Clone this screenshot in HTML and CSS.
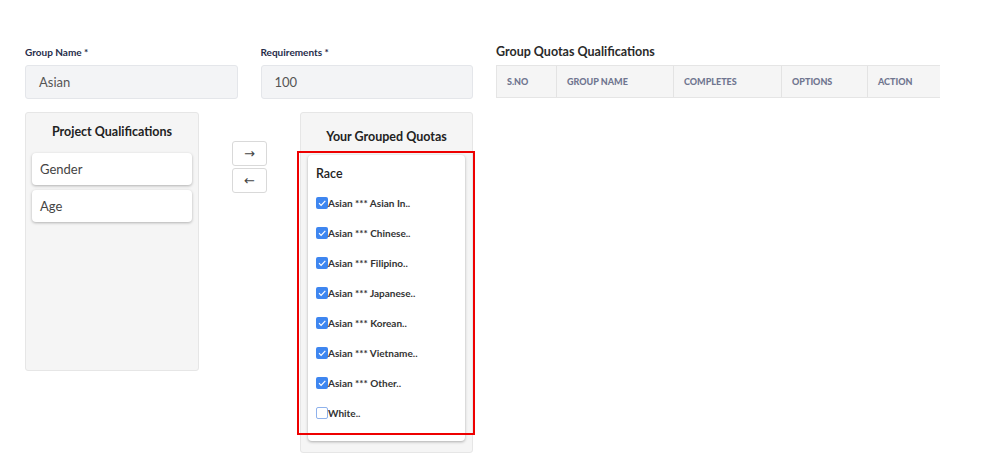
FILE: index.html
```html
<!DOCTYPE html>
<html>
<head>
<meta charset="utf-8">
<link rel="stylesheet" href="styles.css">
</head>
<body>
<div class="page">
  <div class="left">
    <div class="fields">
      <div class="field">
        <label class="label">Group Name *</label>
        <div class="input">Asian</div>
      </div>
      <div class="field">
        <label class="label">Requirements *</label>
        <div class="input">100</div>
      </div>
    </div>
    <div class="panels">
      <div class="panel pq">
        <div class="panel-title">Project Qualifications</div>
        <div class="qcard">Gender</div>
        <div class="qcard">Age</div>
      </div>
      <div class="buttons">
        <button class="arrow">&rarr;</button>
        <button class="arrow">&larr;</button>
      </div>
      <div class="panel gq">
        <div class="panel-title gq-title">Your Grouped Quotas</div>
        <div class="gcard">
          <div class="race">Race</div>
          <div class="row"><span class="cb on"><svg viewBox="0 0 12 12" width="12" height="12"><path d="M3 6.2 L5.1 8.3 L9.3 3.8" fill="none" stroke="#fff" stroke-width="1.2"/></svg></span>Asian *** Asian In..</div>
          <div class="row"><span class="cb on"><svg viewBox="0 0 12 12" width="12" height="12"><path d="M3 6.2 L5.1 8.3 L9.3 3.8" fill="none" stroke="#fff" stroke-width="1.2"/></svg></span>Asian *** Chinese..</div>
          <div class="row"><span class="cb on"><svg viewBox="0 0 12 12" width="12" height="12"><path d="M3 6.2 L5.1 8.3 L9.3 3.8" fill="none" stroke="#fff" stroke-width="1.2"/></svg></span>Asian *** Filipino..</div>
          <div class="row"><span class="cb on"><svg viewBox="0 0 12 12" width="12" height="12"><path d="M3 6.2 L5.1 8.3 L9.3 3.8" fill="none" stroke="#fff" stroke-width="1.2"/></svg></span>Asian *** Japanese..</div>
          <div class="row"><span class="cb on"><svg viewBox="0 0 12 12" width="12" height="12"><path d="M3 6.2 L5.1 8.3 L9.3 3.8" fill="none" stroke="#fff" stroke-width="1.2"/></svg></span>Asian *** Korean..</div>
          <div class="row"><span class="cb on"><svg viewBox="0 0 12 12" width="12" height="12"><path d="M3 6.2 L5.1 8.3 L9.3 3.8" fill="none" stroke="#fff" stroke-width="1.2"/></svg></span>Asian *** Vietname..</div>
          <div class="row"><span class="cb on"><svg viewBox="0 0 12 12" width="12" height="12"><path d="M3 6.2 L5.1 8.3 L9.3 3.8" fill="none" stroke="#fff" stroke-width="1.2"/></svg></span>Asian *** Other..</div>
          <div class="row"><span class="cb"></span>White..</div>
        </div>
        <div class="highlight"></div>
      </div>
    </div>
  </div>
  <div class="right">
    <div class="table-title">Group Quotas Qualifications</div>
    <div class="thead">
      <div class="th c1">S.NO</div>
      <div class="th c2">GROUP NAME</div>
      <div class="th c3">COMPLETES</div>
      <div class="th c4">OPTIONS</div>
      <div class="th c5">ACTION</div>
    </div>
  </div>
</div>
</body>
</html>
```

FILE: styles.css
```css
* { box-sizing: border-box; }
body {
  margin: 0;
  background: #fff;
  font-family: "Lato", "Noto Sans", sans-serif;
  color: #333;
}
.page {
  display: flex;
  gap: 23px;
  padding: 45px 0 0 25px;
}
.left { width: 448px; }
.fields { display: flex; gap: 23px; }
.field { width: 213px; }
.label {
  display: block;
  font-size: 10px;
  font-weight: 700;
  color: #262c4a;
  line-height: 14px;
  margin-bottom: 6px;
}
.input {
  height: 34px;
  background: #f3f4f6;
  border: 1px solid #e4e6ea;
  border-radius: 3px;
  padding: 0 13px;
  display: flex;
  align-items: center;
  font-size: 13px;
  color: #555;
}
.panels {
  display: flex;
  align-items: flex-start;
  margin-top: 13px;
}
.panel {
  background: #f5f5f5;
  border: 1px solid #e6e6e6;
  border-radius: 3px;
  position: relative;
}
.pq {
  width: 174px;
  height: 259px;
  padding: 10px 6px 0;
}
.panel-title {
  text-align: center;
  font-size: 12.5px;
  font-weight: 700;
  color: #222;
  line-height: 18px;
  margin-bottom: 12px;
}
.qcard {
  background: #fff;
  border-radius: 4px;
  box-shadow: 0 1px 3px rgba(0,0,0,0.28);
  height: 32px;
  display: flex;
  align-items: center;
  padding: 0 8px;
  font-size: 13px;
  color: #444;
  margin-bottom: 5px;
}
.buttons {
  display: flex;
  flex-direction: column;
  gap: 2px;
  margin: 29px 33px 0;
}
.arrow {
  width: 35px;
  height: 25px;
  background: #fff;
  border: 1px solid #d9d9d9;
  border-radius: 3px;
  font-size: 13px;
  color: #444;
  padding: 0;
  font-family: "DejaVu Sans", sans-serif;
}
.gq {
  width: 173px;
  height: 341px;
  padding: 15px 7px 0;
}
.gq-title { margin-bottom: 9px; }
.gcard {
  background: #fff;
  border-radius: 4px;
  box-shadow: 0 1px 3px rgba(0,0,0,0.3);
  height: 286px;
  padding: 10px 8px 0;
}
.race {
  font-size: 12.5px;
  font-weight: 600;
  color: #222;
  line-height: 17px;
  margin-bottom: 6px;
}
.row {
  height: 30px;
  display: flex;
  align-items: center;
  font-size: 10px;
  font-weight: 700;
  color: #333;
}
.cb {
  width: 12px;
  height: 12px;
  border-radius: 2px;
  border: 1px solid #8fb2ec;
  background: #fff;
  display: inline-flex;
}
.cb.on {
  background: #3e86f0;
  border: none;
}
.highlight {
  position: absolute;
  left: -4px;
  top: 38px;
  width: 178px;
  height: 284px;
  border: 2px solid #ee0000;
}
.right { width: 444px; }
.table-title {
  font-size: 12.5px;
  font-weight: 700;
  color: #2a2a2a;
  line-height: 14px;
  margin-bottom: 6px;
}
.thead {
  display: flex;
  height: 33px;
  background: #f5f5f5;
  border: 1px solid #e5e5e5;
  border-right: none;
}
.th {
  display: flex;
  align-items: center;
  padding-left: 10px;
  font-size: 9px;
  font-weight: 900;
  color: #707690;
  border-right: 1px solid #e3e3e3;
}
.th:last-child { border-right: none; }
.c1 { width: 60px; }
.c2 { width: 117px; }
.c3 { width: 108px; }
.c4 { width: 86px; }
.c5 { flex: 1; }
```
